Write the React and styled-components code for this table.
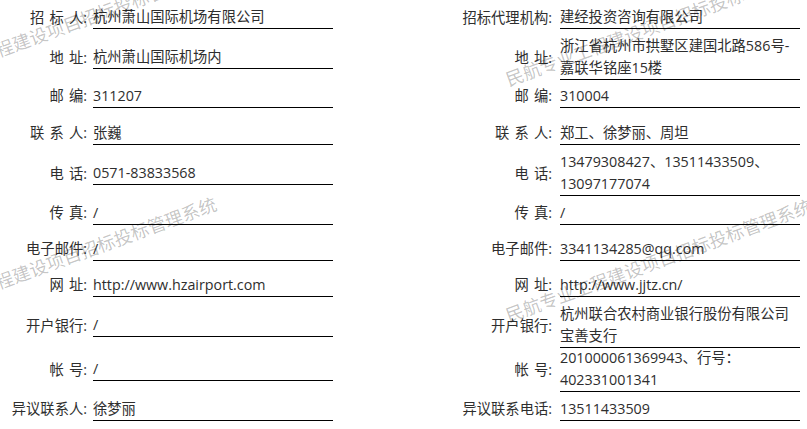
import React from "react";
import styled, { createGlobalStyle } from "styled-components";

const GlobalStyle = createGlobalStyle`
  body {
    margin: 0;
    background: #ffffff;
    font-family: "Open Sans", "Noto Sans CJK SC", sans-serif;
  }
`;

const PageStyled = styled.div`
  position: relative;
  width: 807px;
  height: 429px;
  overflow: hidden;
  background: #ffffff;
`;

const RowStyled = styled.div`
  display: grid;
  grid-template-columns: 93px 240px 227px 240px;
  height: ${(p) => p.$h}px;
  align-items: center;
`;

const Label = styled.div`
  text-align: right;
  padding-right: ${(p) => (p.$right ? 8 : 6)}px;
  font-size: 14.3px;
  line-height: 22px;
  word-spacing: 1.5px;
  color: #2e2e2e;
  white-space: nowrap;
`;

const Value = styled.div`
  width: 240px;
  border-bottom: 1px solid #000000;
  font-size: 14.3px;
  line-height: 22px;
  color: #2e2e2e;
`;

const WatermarkText = styled.span`
  position: absolute;
  left: ${(p) => p.$x}px;
  top: ${(p) => p.$y}px;
  transform: rotate(-20deg);
  transform-origin: 0 50%;
  font-family: "Noto Sans CJK SC", sans-serif;
  font-size: 18px;
  line-height: 18px;
  color: rgba(0, 0, 0, 0.24);
  white-space: nowrap;
  pointer-events: none;
`;

const rows = [
  { h: 35, l: ["招 标 人:", "杭州萧山国际机场有限公司"], r: ["招标代理机构:", "建经投资咨询有限公司"] },
  { h: 42, l: ["地 址:", "杭州萧山国际机场内"], r: ["地 址:", "浙江省杭州市拱墅区建国北路586号-嘉联华铭座15楼"] },
  { h: 38, l: ["邮 编:", "311207"], r: ["邮 编:", "310004"] },
  { h: 36, l: ["联 系 人:", "张巍"], r: ["联 系 人:", "郑工、徐梦丽、周坦"] },
  { h: 44, l: ["电 话:", "0571-83833568"], r: ["电 话:", "13479308427、13511433509、13097177074"] },
  { h: 36, l: ["传 真:", "/"], r: ["传 真:", "/"] },
  { h: 36, l: ["电子邮件:", "/"], r: ["电子邮件:", "3341134285@qq.com"] },
  { h: 36, l: ["网 址:", "http://www.hzairport.com"], r: ["网 址:", "http://www.jjtz.cn/"] },
  { h: 44, l: ["开户银行:", "/"], r: ["开户银行:", "杭州联合农村商业银行股份有限公司宝善支行"] },
  { h: 44, l: ["帐 号:", "/"], r: ["帐 号:", "201000061369943、行号：402331001341"] },
  { h: 36, l: ["异议联系人:", "徐梦丽"], r: ["异议联系电话:", "13511433509"] },
];

const marks = [
  { x: -89, y: 72 },
  { x: 506, y: 70 },
  { x: -89, y: 304 },
  { x: 506, y: 306 },
];

const App = () => {
  return (
    <>
      <GlobalStyle />
      <PageStyled>
        {rows.map((row, i) => (
          <RowStyled key={i} $h={row.h}>
            <Label>{row.l[0]}</Label>
            <Value>{row.l[1]}</Value>
            <Label $right>{row.r[0]}</Label>
            <Value>{row.r[1]}</Value>
          </RowStyled>
        ))}
        {marks.map((m, i) => (
          <WatermarkText key={i} $x={m.x} $y={m.y}>
            民航专业工程建设项目招标投标管理系统
          </WatermarkText>
        ))}
      </PageStyled>
    </>
  );
};

export default App;
